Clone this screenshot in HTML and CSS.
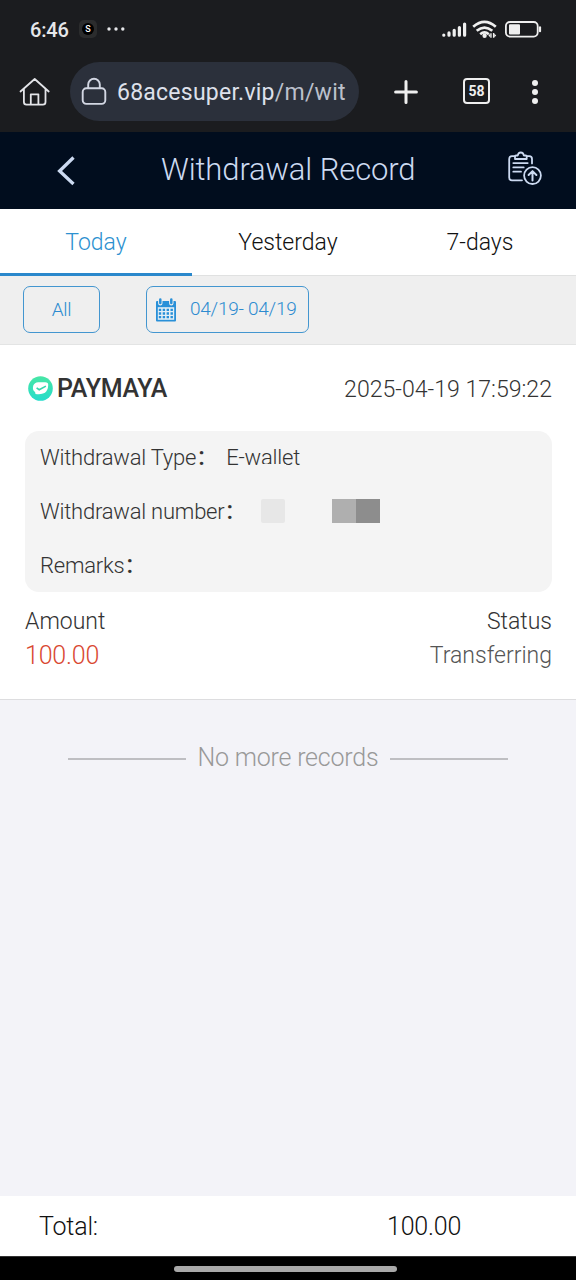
FILE: index.html
```html
<!DOCTYPE html>
<html lang="en">
<head>
<meta charset="utf-8">
<title>Withdrawal Record</title>
<link rel="stylesheet" href="styles.css">
</head>
<body>
<div class="screen">
  <div class="statusbar">
    <span class="clock">6:46</span>
    <span class="app-badge"><span class="app-dot">S</span></span>
    <svg class="more" width="18" height="4" viewBox="0 0 18 4" fill="#e6e7ea"><circle cx="2" cy="2" r="1.7"/><circle cx="9" cy="2" r="1.7"/><circle cx="15.8" cy="2" r="1.7"/></svg>
    <svg class="status-icons" width="102" height="22" viewBox="0 0 102 22">
      <g stroke="#efefef" stroke-width="3.2" stroke-linecap="round">
        <path d="M3.8 15.6v.1M9 13.4v2.3M14.2 10.8v4.9M19.4 8v7.7M24.6 4.6v11.1" transform="translate(0 .5)"/>
      </g>
      <g fill="none" stroke="#efefef" stroke-width="2.7">
        <path d="M33.2 7.8q11.3-9.8 22.6 0M36.7 11.8q7.8-6.4 15.6 0M40.2 15.2q4.3-3.5 8.6 0"/>
      </g>
      <circle cx="44.6" cy="16.8" r="2.2" fill="#efefef"/>
      <path d="M51 14.2v4.6M53.6 14v4.8" stroke="#efefef" stroke-width="1.3"/><path d="M50.4 14.6v3.8l-2-1.9zM54.2 14.6v3.8l2-1.9z" fill="#efefef"/>
      <rect x="65.9" y="3" width="31.8" height="14.6" rx="4" fill="none" stroke="#efefef" stroke-width="1.8"/>
      <rect x="69" y="5.2" width="11" height="10.2" rx="1" fill="#efefef"/>
      <path d="M100 8.4v3.8" stroke="#efefef" stroke-width="2.2" stroke-linecap="round"/>
    </svg>
  </div>
  <div class="browserbar">
    <svg class="home" width="32" height="30" viewBox="0 0 32 30" fill="none" stroke="#e3e4e8" stroke-width="1.8" stroke-linecap="round" stroke-linejoin="round"><path d="M1.5 14.5 15.7 2l14 12.5M4.9 12v13a2.6 2.6 0 0 0 2.6 2.6h16.4a2.6 2.6 0 0 0 2.6-2.6V12M11.8 27.4V17.3h7.6v10.1"/></svg>
    <div class="address">
      <svg width="26" height="29" viewBox="0 0 26 29" fill="none" stroke="#d3d7e3" stroke-width="1.9"><rect x="1.7" y="11.3" width="22.6" height="15.6" rx="3.6"/><path d="M7.2 11.3V7.6a5.8 5.8 0 0 1 11.6 0v3.7"/></svg>
      <span class="url">68acesuper.vip<span class="path">/m/wit</span></span>
    </div>
    <svg class="plus" width="24" height="24" viewBox="0 0 24 24" stroke="#efefef" stroke-width="3" stroke-linecap="round"><path d="M12 1.6v20.8M1.6 12h20.8"/></svg>
    <span class="tabcount">58</span>
    <svg class="kebab" width="8" height="24" viewBox="0 0 8 24" fill="#efefef"><circle cx="4" cy="3" r="3"/><circle cx="4" cy="12" r="3"/><circle cx="4" cy="21" r="3"/></svg>
  </div>
  <header class="header">
    <svg class="back" width="20" height="30" viewBox="0 0 20 30" fill="none" stroke="#ccdaf1" stroke-width="3.3"><path d="M17.5 1.5 3.6 15l13.9 13"/></svg>
    <h1 class="title">Withdrawal Record</h1>
    <svg class="report" width="36" height="36" viewBox="0 0 36 36" fill="none" stroke="#ccdaf1" stroke-width="1.8" stroke-linecap="round" stroke-linejoin="round">
      <path d="M8 5.2H5a2.8 2.8 0 0 0-2.8 2.8v18.5a2.8 2.8 0 0 0 2.8 2.8h10M19.7 5.2h2.5A2.8 2.8 0 0 1 25 8v4.4"/>
      <path d="M8 8V5.5q0-1 1-1h1.8C11 2.8 12 1.5 13.8 1.5s2.8 1.3 3 3h1.9q1 0 1 1V8z"/>
      <path d="M6.3 12.1h14.4M6.3 16.4h10.4M6.3 20.7h7.7"/>
      <circle cx="25.5" cy="24.6" r="8.4"/>
      <path d="M25.5 29.4v-9.1M21.6 24l3.9-3.9 3.9 3.9" stroke-width="2"/>
    </svg>
  </header>
  <nav class="tabs">
    <span class="tab active">Today</span>
    <span class="tab">Yesterday</span>
    <span class="tab">7-days</span>
  </nav>
  <div class="filters">
    <span class="pill all">All</span>
    <span class="pill dates">
      <svg width="22" height="24" viewBox="0 0 22 24"><path d="M2 3h18q1 0 1 1v18.5q0 1-1 1H2q-1 0-1-1V4q0-1 1-1z" fill="#2990d8"/><path d="M2.8 9.2h16.4v12.6H2.8z" fill="#e3eff6"/><path d="M5.3 1v4.2M16.3 1v4.2" stroke="#efefef" stroke-width="4.4" stroke-linecap="round"/><path d="M5.3 1.6v3.4M16.3 1.6v3.4" stroke="#2990d8" stroke-width="2.5" stroke-linecap="round"/><g stroke="#2990d8" stroke-width="2.3" stroke-dasharray="2.4 1.5"><path d="M3.8 11.8h14.6M3.8 15.5h14.6M3.8 19.2h14.6"/></g></svg>
      <span class="range">04/19- 04/19</span>
    </span>
  </div>
  <section class="record">
    <div class="record-head">
      <svg width="25" height="25" viewBox="0 0 25 25"><defs><linearGradient id="mint" x2="0" y2="1"><stop stop-color="#48e6a5"/><stop offset="1" stop-color="#25dccb"/></linearGradient></defs><circle cx="12.5" cy="12.5" r="12.3" fill="url(#mint)"/><path d="M5.3 9.4q1.2-2.9 4.9-3.2h7q3.2 0 3 2.8l-.2 2.2q-.7 4.9-5 6.4-3.7 1.3-7.6.3.4-1.2-.9-2.3-2.4-2.2-1.2-6.2z" fill="#fff"/><path d="m8.6 11.8 2.6 1.9 6.7-3.6" fill="none" stroke="#35d6ac" stroke-width="1.6"/></svg>
      <span class="wallet">PAYMAYA</span>
      <time class="timestamp">2025-04-19 17:59:22</time>
    </div>
    <div class="details">
      <div class="detail"><span class="label">Withdrawal Type</span><span class="colon">:</span><span class="value">E-wallet<i class="veil"></i></span></div>
      <div class="detail"><span class="label">Withdrawal number</span><span class="colon">:</span><i class="block pale"></i><i class="block mid"></i><i class="block dark"></i></div>
      <div class="detail"><span class="label">Remarks</span><span class="colon">:</span></div>
    </div>
    <div class="summary"><span class="amount-label">Amount</span><span class="status-label">Status</span></div>
    <div class="summary second"><span class="amount">100.00</span><span class="state">Transferring</span></div>
  </section>
  <main class="empty"><i class="rule"></i><span class="end">No more records</span><i class="rule"></i></main>
  <footer class="total"><span class="total-label">Total:</span><span class="total-value">100.00</span></footer>
  <div class="gesture"><i class="handle"></i></div>
</div>
</body>
</html>
```
FILE: styles.css
```css
* { box-sizing: border-box; }
body { margin: 0; font-family: Roboto, "Noto Sans", sans-serif; font-weight: 300; color: #333; }
svg { display: block; flex: none; }
.screen { width: 576px; height: 1280px; display: flex; flex-direction: column; background: #f3f3f8; overflow: hidden; white-space: nowrap; }
.screen > * { flex: none; }
.statusbar { height: 62px; background: #1b1c1f; display: flex; align-items: center; padding: 0 34px 4px 30px; color: #e6e7ea; }
.clock { font-size: 20px; letter-spacing: -.15px; font-weight: 500; width: 49px; padding-top: 1px; }
.app-badge { width: 18px; height: 18px; border-radius: 5px; background: #2b2c2d; display: grid; place-items: center; }
.app-dot { width: 12px; height: 12px; border-radius: 50%; background: #000; color: #fff; font-size: 9px; line-height: 12px; font-weight: 500; text-align: center; }
.more { margin-left: 10px; }
.status-icons { margin: 1px 0 0 auto; }
.browserbar { height: 70px; padding-bottom: 11px; background: #1b1c1f; display: flex; align-items: center; }
.home { margin-left: 19px; }
.address { width: 289px; height: 59px; margin-left: 19px; border-radius: 30px; background: #2b303b; display: flex; align-items: center; padding-left: 11px; gap: 10px; }
.url { padding-top: 2px; color: #dee1eb; font-size: 23px; letter-spacing: .24px; font-weight: 400; }
.path { color: #bcc0cc; }
.plus { margin-left: 35px; }
.tabcount { width: 27px; height: 26px; margin: -1px 0 0 45px; border: 2px solid #efefef; border-radius: 4px; color: #efefef; font-size: 14px; line-height: 22px; font-weight: 700; text-align: center; }
.kebab { margin-left: 41px; }
.header { height: 77px; background: #010d1e; display: flex; align-items: center; }
.back { margin-left: 56px; }
.title { width: 256px; margin: -2px 0 0 85px; color: #ccdaf1; font-size: 31px; letter-spacing: -.12px; font-weight: 300; }
.report { margin: -4px 0 0 90px; }
.tabs { height: 67px; background: #fff; border-bottom: 1px solid #e0e1e1; display: grid; grid-template-columns: repeat(3, 1fr); }
.tab { height: 67px; text-align: center; line-height: 67px; font-size: 23px; color: #111; }
.tab.active { color: #2d91d0; border-bottom: 3px solid #2a88cc; }
.filters { height: 69px; background: #efefef; border-bottom: 1px solid #e3e4e4; display: flex; padding: 10px 0 0 23px; }
.pill { height: 47px; border: 1px solid #4396d0; border-radius: 7px; color: #2d8bd0; font-size: 19px; letter-spacing: -.25px; display: flex; align-items: center; }
.all { width: 77px; justify-content: center; }
.dates { width: 163px; margin-left: 46px; padding-left: 8px; gap: 13px; }
.range { padding-bottom: 2px; }
.record { height: 355px; background: #fff; border-bottom: 1px solid #dddddf; padding: 0 24px 0 25px; }
.record-head { height: 86px; display: flex; align-items: center; padding-left: 3px; }
.wallet { margin-left: 4px; padding-top: 1px; color: #333; font-size: 25px; letter-spacing: -.3px; font-weight: 500; }
.timestamp { margin-left: auto; padding-top: 2px; font-size: 23.1px; }
.details { height: 161px; background: #f4f4f4; border-radius: 14px; padding-left: 15px; }
.detail { height: 54px; display: flex; align-items: center; font-size: 22px; letter-spacing: -.22px; padding-bottom: 2px; }
.colon { font-size: 25px; line-height: 25px; font-weight: 500; width: 9px; margin: -1px 0 0 2px; }
.value { position: relative; margin-left: 19px; }
.veil { position: absolute; left: 35px; bottom: 0; width: 25px; height: 6px; background: #f4f4f4; }
.block { width: 24px; height: 24px; margin-top: -1px; }
.pale { margin-left: 26px; background: #e7e7e7; border-radius: 2px; }
.mid { margin-left: 47px; background: #afafaf; }
.dark { background: #8d8d8d; }
.summary { height: 34px; margin-top: 12px; display: flex; justify-content: space-between; align-items: center; font-size: 23px; }
.second { margin-top: 0; }
.amount { color: #d94831; font-size: 25px; letter-spacing: -.2px; }
.state { color: #555; }
.empty { height: 496px; padding: 40px 68px 0; display: flex; justify-content: space-between; align-items: flex-start; }
.rule { width: 118px; height: 2px; margin-top: 18px; background: #bebec2; }
.end { font-size: 25px; letter-spacing: -.2px; line-height: 36px; color: #999; }
.total { height: 60px; background: #fff; display: flex; align-items: center; padding-left: 39px; font-size: 25px; letter-spacing: -.2px; color: #111; }
.total-label { width: 348px; }
.gesture { height: 24px; background: #000; border-top: 1px solid #333; display: flex; justify-content: center; padding: 9px 5px 0 0; }
.handle { width: 223px; height: 6px; border-radius: 3px; background: #a9a9a9; }
```
